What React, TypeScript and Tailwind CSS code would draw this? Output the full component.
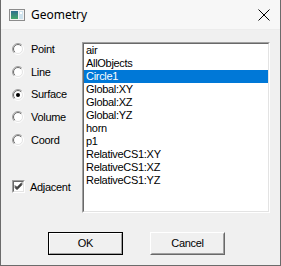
import React from "react";

const items = [
  "air",
  "AllObjects",
  "Circle1",
  "Global:XY",
  "Global:XZ",
  "Global:YZ",
  "horn",
  "p1",
  "RelativeCS1:XY",
  "RelativeCS1:XZ",
  "RelativeCS1:YZ",
];

const modes = ["Point", "Line", "Surface", "Volume", "Coord"];

function AppIcon() {
  return (
    <svg width="16" height="12" viewBox="0 0 16 12">
      <defs>
        <linearGradient id="ic" x1="0" y1="0" x2="0" y2="1">
          <stop offset="0" stopColor="#2f6f8f" />
          <stop offset="1" stopColor="#45a86a" />
        </linearGradient>
      </defs>
      <rect x="0.5" y="0.5" width="15" height="11" fill="#f4f4f4" stroke="#8c8c8c" />
      <rect x="2" y="2" width="7" height="8" fill="url(#ic)" />
      <rect x="10" y="2" width="4" height="8" fill="#cfe3ee" />
      <rect x="11" y="3" width="2" height="2" fill="#ffffff" />
    </svg>
  );
}

function Radio({ checked }: { checked?: boolean }) {
  return (
    <svg width="12" height="12" viewBox="0 0 12 12">
      <defs>
        <linearGradient id="ro" x1="0" y1="0" x2="1" y2="1">
          <stop offset="0.45" stopColor="#a0a0a0" />
          <stop offset="0.55" stopColor="#ffffff" />
        </linearGradient>
        <linearGradient id="ri" x1="0" y1="0" x2="1" y2="1">
          <stop offset="0.45" stopColor="#696969" />
          <stop offset="0.55" stopColor="#e3e3e3" />
        </linearGradient>
      </defs>
      <circle cx="6" cy="6" r="5.5" fill="none" stroke="url(#ro)" strokeWidth="1" />
      <circle cx="6" cy="6" r="4.5" fill="#ffffff" stroke="url(#ri)" strokeWidth="1" />
      {checked && <circle cx="6" cy="6" r="2" fill="#000000" />}
    </svg>
  );
}

function Check() {
  return (
    <div className="w-[13px] h-[13px] border border-t-[#a0a0a0] border-l-[#a0a0a0] border-b-white border-r-white">
      <div className="w-full h-full border border-t-[#696969] border-l-[#696969] border-b-[#e3e3e3] border-r-[#e3e3e3] bg-white">
        <svg width="9" height="9" viewBox="0 0 9 9">
          <path d="M1 3.5 L3 5.5 L8 0.5 M1 4.5 L3 6.5 L8 1.5 M1 5.5 L3 7.5 L8 2.5" stroke="#000" strokeWidth="1" fill="none" />
        </svg>
      </div>
    </div>
  );
}

export default function App() {
  return (
    <div
      className="w-[281px] h-[266px] flex flex-col bg-[#f0f0f0] border-x border-b border-[#6b6b6b] text-black"
      style={{ fontFamily: '"Liberation Sans", Arial, sans-serif' }}
    >
      <div className="h-[30px] flex items-center bg-[#f7f7f7] border-b border-[#ececec]">
        <div className="ml-[8px]">
          <AppIcon />
        </div>
        <span className="ml-[6px] text-[12px] font-['Noto_Sans',sans-serif]">Geometry</span>
        <svg className="ml-auto mr-[10px]" width="12" height="12" viewBox="0 0 12 12">
          <path d="M0.5 0.5 L11.5 11.5 M11.5 0.5 L0.5 11.5" stroke="#000" strokeWidth="1" />
        </svg>
      </div>

      <div className="flex pt-[8px] pl-[11px] text-[11px] tracking-[-0.3px]">
        <div className="w-[70px] flex flex-col">
          {modes.map((m) => (
            <div key={m} className="h-[22.7px] flex items-center">
              <Radio checked={m === "Surface"} />
              <span className="ml-[7px]">{m}</span>
            </div>
          ))}
          <div className="mt-[24px] h-[23px] flex items-center">
            <Check />
            <span className="ml-[5px]">Adjacent</span>
          </div>
        </div>
        <div className="mt-[4px] w-[188px] h-[171px] border border-t-[#a0a0a0] border-l-[#a0a0a0] border-b-white border-r-white">
          <div className="w-full h-full border border-t-[#696969] border-l-[#696969] border-b-[#e3e3e3] border-r-[#e3e3e3] bg-white">
            {items.map((it) => (
              <div
                key={it}
                className={
                  "h-[13px] leading-[13px] px-[2px] " +
                  (it === "Circle1" ? "bg-[#0078d7] text-white" : "")
                }
              >
                {it}
              </div>
            ))}
          </div>
        </div>
      </div>

      <div className="flex pl-[47px] gap-[27px] mt-[19px] text-[11px] tracking-[-0.3px]">
        <button className="w-[75px] h-[23px] border border-black">
          <div className="w-full h-full border border-t-white border-l-white border-b-[#a0a0a0] border-r-[#a0a0a0] bg-[#f0f0f0] flex items-center justify-center">
            OK
          </div>
        </button>
        <button className="w-[75px] h-[23px] border border-t-white border-l-white border-b-[#696969] border-r-[#696969]">
          <div className="w-full h-full border border-t-[#f0f0f0] border-l-[#f0f0f0] border-b-[#a0a0a0] border-r-[#a0a0a0] bg-[#f0f0f0] flex items-center justify-center">
            Cancel
          </div>
        </button>
      </div>
    </div>
  );
}
